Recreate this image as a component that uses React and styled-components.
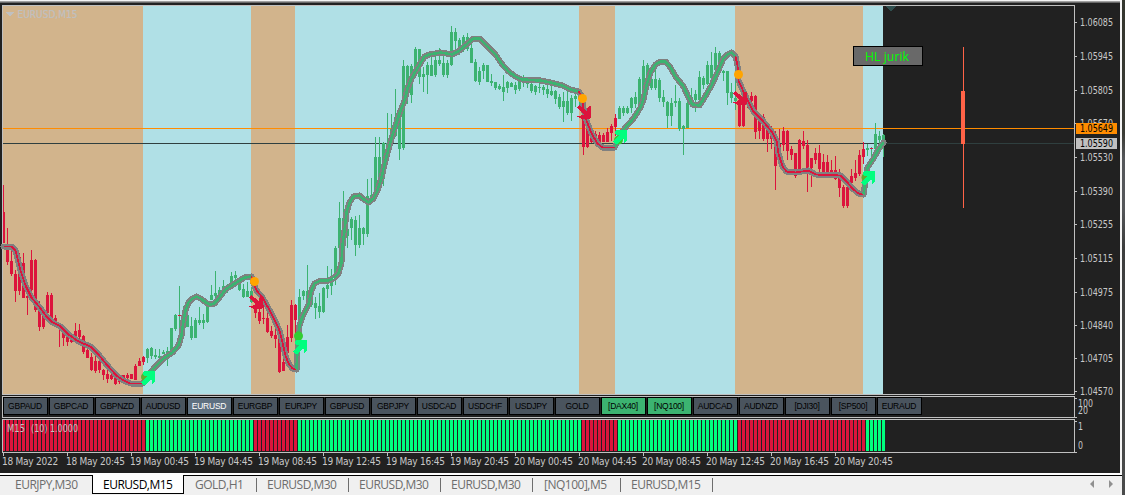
import React from 'react'
import styled, { createGlobalStyle } from 'styled-components'

const RED = '#dc143c'
const GREEN = '#3cb371'
const LIME = '#00ff7f'
const TAN = '#d2b48c'
const SKY = '#b0e0e6'
const ORANGE = '#ffa500'

// trend zones, x from / x to
const ZONES = [
  { from: 3, to: 143, color: TAN },
  { from: 143, to: 251, color: SKY },
  { from: 251, to: 295, color: TAN },
  { from: 295, to: 579, color: SKY },
  { from: 579, to: 615, color: TAN },
  { from: 615, to: 735, color: SKY },
  { from: 735, to: 863, color: TAN },
  { from: 863, to: 883, color: SKY },
]

// index of the first bar of every trend
const TRENDS = [
  { start: 0, up: false },
  { start: 36, up: true },
  { start: 63, up: false },
  { start: 74, up: true },
  { start: 145, up: false },
  { start: 154, up: true },
  { start: 184, up: false },
  { start: 216, up: true },
]
const BAR_COUNT = 221

// high, body top, body bottom, low (one bar every 4px)
const CANDLES = [
  [185,212,243,243],[228,248,262,265],[251,261,274,276],[270,274,291,302],[253,257,291,295],[253,263,298,298],[287,296,298,315],[250,260,290,297],[259,260,310,312],[301,305,327,331],
  [312,313,327,329],[292,295,313,317],[293,295,318,320],[315,318,323,323],[323,324,326,347],[326,329,338,346],[332,333,342,346],[336,337,342,343],[323,331,337,340],[324,330,337,340],
  [335,336,352,354],[343,350,358,358],[353,357,370,371],[353,361,371,373],[353,361,370,373],[369,370,375,380],[370,374,379,383],[373,375,379,380],[373,376,384,385],[375,379,382,384],
  [375,375,380,384],[373,375,378,380],[374,374,379,379],[364,366,380,380],[358,361,366,366],[356,357,362,365],[348,349,358,363],[347,348,356,359],[349,355,357,359],[349,356,358,360],
  [350,352,354,354],[347,351,354,366],[328,328,350,351],[314,315,329,331],[286,315,316,330],[306,311,320,320],[310,315,327,327],[317,326,338,340],[318,320,338,338],[307,320,323,325],
  [314,320,323,329],[300,305,322,323],[285,295,300,300],[271,293,296,300],[287,290,295,295],[280,286,293,296],[284,286,289,293],[272,276,283,289],[271,275,278,280],[279,282,290,291],
  [284,289,297,298],[282,291,297,297],[287,291,302,303],[301,305,313,318],[295,312,321,324],[305,318,319,324],[312,318,332,333],[326,331,336,338],[328,335,339,348],[331,338,372,373],
  [338,362,371,371],[325,337,353,361],[300,305,338,342],[304,305,320,335],[289,297,320,324],[290,291,296,300],[265,291,300,304],[292,293,305,307],[297,303,308,319],[293,306,312,318],
  [287,288,312,313],[266,285,289,298],[269,281,286,295],[246,248,280,285],[202,218,248,250],[191,218,247,250],[213,229,236,248],[217,219,228,240],[216,220,245,256],[215,228,245,248],
  [227,228,234,245],[179,196,234,237],[178,195,200,202],[137,157,196,198],[137,157,180,190],[142,143,179,186],[113,143,160,165],[114,129,143,146],[89,117,136,137],[106,109,149,160],
  [60,66,148,150],[65,66,90,104],[64,66,95,103],[47,49,68,75],[49,49,77,84],[67,74,77,92],[62,65,75,94],[57,65,76,76],[56,60,75,77],[48,60,64,66],
  [56,63,75,77],[60,63,75,78],[26,32,65,66],[28,32,41,50],[38,40,50,55],[35,37,49,52],[33,37,49,51],[40,48,63,63],[59,62,81,82],[67,71,82,85],
  [63,65,71,79],[65,65,82,82],[74,81,83,86],[82,82,88,90],[84,86,89,90],[75,87,92,101],[81,82,88,93],[82,83,87,87],[82,85,90,94],[80,81,89,91],
  [75,78,83,87],[79,80,84,88],[81,84,91,93],[85,86,92,95],[82,87,88,93],[85,87,90,95],[85,89,94,98],[85,91,95,96],[90,91,99,104],[94,97,107,109],
  [92,101,107,122],[91,101,113,115],[95,98,113,121],[94,96,99,107],[93,95,99,107],[100,105,147,155],[115,127,147,148],[130,137,142,143],[131,134,140,144],[132,135,142,142],
  [133,135,142,142],[128,132,142,142],[124,126,133,141],[114,118,127,136],[106,108,119,119],[106,108,113,116],[106,108,113,114],[97,98,108,113],[92,97,104,108],[77,79,108,108],
  [60,66,103,105],[63,65,80,85],[70,79,88,90],[67,79,88,90],[78,80,98,102],[90,97,102,107],[101,102,116,128],[98,103,116,126],[85,101,103,107],[98,101,129,131],
  [125,126,129,155],[102,103,128,128],[88,97,105,106],[90,94,100,112],[71,77,100,102],[76,78,85,89],[61,65,84,85],[52,65,78,82],[47,53,70,72],[51,53,70,74],
  [70,71,73,81],[71,71,93,105],[83,92,98,103],[80,98,101,110],[99,100,126,127],[90,95,126,127],[93,98,104,108],[92,96,101,109],[95,96,132,139],[115,120,131,139],
  [114,117,139,141],[123,125,139,152],[126,130,139,149],[131,140,166,190],[129,144,157,162],[127,131,145,151],[130,131,151,160],[146,149,155,160],[153,153,176,178],[139,140,175,175],
  [131,141,146,149],[140,145,170,192],[158,158,168,187],[148,153,160,164],[145,153,169,172],[154,162,172,174],[155,162,172,173],[160,170,172,178],[156,170,179,180],[169,177,188,197],
  [185,187,206,208],[178,187,206,208],[169,176,183,185],[160,173,178,181],[150,155,174,176],[142,149,157,164],[144,148,150,156],[147,148,149,158],[123,134,149,155],[131,136,140,149],
  [134,135,140,157],
]
const DOJI_RED = [44, 217]

const LINES = [
  { up: false, pts: '3,246 11,246 15,250 17,258 20,270 25,285 31,297 40,308 46,316 52,322 60,326 68,334 78,341 90,346 98,354 106,364 116,375 123,380 130,383 142,383' },
  { up: true, pts: '142,383 148,374 154,367 163,358 172,352 178,345 181,335 183,320 185,310 188,302 192,298 196,296 200,298 207,303 210,304 214,303 219,297 225,289 236,282 244,277 251,276' },
  { up: false, pts: '251,276 253,283 256,290 262,297 272,315 279,330 282,342 285,355 288,363 292,368 296,369' },
  { up: true, pts: '296,369 297,350 298,333 299,325 302,316 308,304 311,290 314,283 320,280 328,280 333,278 338,273 341,262 342,245 344,230 346,212 349,202 353,196 359,195 362,198 368,202 373,198 377,190 381,177 385,160 389,145 394,128 399,113 404,100 407,88 411,78 418,66 424,56 429,54 440,52 452,54 459,50 467,43 473,38 479,38 486,45 495,54 501,63 508,71 515,76 521,79 540,80 550,82 562,85 570,89 578,91' },
  { up: false, pts: '578,91 581,95 583,108 586,120 591,133 597,143 602,147 614,147' },
  { up: true, pts: '614,147 619,137 624,128 633,118 640,107 643,99 646,85 650,72 655,64 660,61 665,61 670,67 675,76 683,86 688,97 692,104 699,105 704,97 711,85 717,72 723,58 727,54 731,52 735,56' },
  { up: false, pts: '735,56 737,65 738,80 742,89 747,100 753,111 762,120 771,131 776,140 778,153 782,166 786,171 795,172 808,170 815,174 840,175 846,181 852,188 858,193 863,194' },
  { up: true, pts: '863,194 865,180 867,167 873,158 878,149 883,142' },
]

const UP_ARROWS = [[141, 371], [293, 340], [613, 130], [861, 171]]
const DOWN_ARROWS = [[249, 295], [577, 105], [733, 91]]
const DOTS = [
  { x: 145.5, y: 377, color: '#5fae2e' },
  { x: 298.5, y: 336, color: '#32cd32' },
  { x: 618.5, y: 140, color: '#32cd32' },
  { x: 866, y: 177.5, color: '#5fae2e' },
  { x: 254.5, y: 281.5, color: ORANGE },
  { x: 582.5, y: 98.5, color: ORANGE },
  { x: 738.5, y: 74.5, color: ORANGE },
]

const PRICES = [
  ['1.06085', 22], ['1.05945', 56], ['1.05805', 90], ['1.05670', 123], ['1.05530', 157], ['1.05390', 191],
  ['1.05255', 224], ['1.05115', 258], ['1.04975', 292], ['1.04840', 325], ['1.04705', 358], ['1.04570', 391],
]

const SYMBOLS = [
  'GBPAUD', 'GBPCAD', 'GBPNZD', 'AUDUSD', 'EURUSD', 'EURGBP', 'EURJPY', 'GBPUSD', 'GBPJPY', 'USDCAD',
  'USDCHF', 'USDJPY', 'GOLD', '[DAX40]', '[NQ100]', 'AUDCAD', 'AUDNZD', '[DJI30]', '[SP500]', 'EURAUD',
]

const TIMES = [
  '18 May 2022', '18 May 20:45', '19 May 00:45', '19 May 04:45', '19 May 08:45', '19 May 12:45', '19 May 16:45',
  '19 May 20:45', '20 May 00:45', '20 May 04:45', '20 May 08:45', '20 May 12:45', '20 May 16:45', '20 May 20:45',
]

const TABS = [
  { name: 'EURJPY,M30', width: 92, indent: 15 },
  { name: 'EURUSD,M15', width: 92, indent: 10, active: true },
  { name: 'GOLD,H1', width: 73, indent: 11 },
  { name: 'EURUSD,M30', width: 92, indent: 10 },
  { name: 'EURUSD,M30', width: 92, indent: 10 },
  { name: 'EURUSD,M30', width: 92, indent: 10 },
  { name: '[NQ100],M5', width: 88, indent: 11 },
  { name: 'EURUSD,M15', width: 92, indent: 10 },
]

function isUp(i){
  let up = false
  TRENDS.forEach(t => { if(i >= t.start) up = t.up })
  return up
}

function Candle(props){
  const [high, top, bottom, low] = props.data
  const x = 3 + props.index * 4
  const color = isUp(props.index) ? GREEN : RED
  const left = props.index === 0 ? x : x - 1
  return (
    <g fill={color}>
      <rect x={x} y={high} width="1" height={Math.max(low - high, 1)}/>
      <rect x={left} y={top} width={x + 2 - left} height={Math.max(bottom - top, 1)} fill={DOJI_RED.includes(props.index) ? RED : color}/>
    </g>
  )
}

function PriceChart(){
  return (
    <Drawing width="1071" height="388" viewBox="3 6 1071 388" shapeRendering="crispEdges">
      {ZONES.map(z => <rect key={z.from} x={z.from} y="6" width={z.to - z.from} height="388" fill={z.color}/>)}
      <rect x="3" y="128" width="1071" height="1" fill="#ff8c00"/>
      <rect x="3" y="143" width="1071" height="1" fill="#2f3f3f"/>
      {CANDLES.map((c, i) => <Candle key={i} index={i} data={c}/>)}
      {LINES.map((l, i) => (
        <polyline key={i} points={l.pts} transform="translate(0.5 0.5)" fill="none" stroke="#808080" strokeWidth="6" strokeLinejoin="round" strokeLinecap="round"/>
      ))}
      {LINES.map((l, i) => (
        <polyline key={i} points={l.pts} transform="translate(0.5 0.5)" fill="none" stroke={l.up ? GREEN : RED} strokeWidth={l.up ? 2.6 : 1.8} strokeLinejoin="round"/>
      ))}
      {DOTS.map(d => <circle key={d.x} cx={d.x} cy={d.y} r="4.5" fill={d.color} shapeRendering="auto"/>)}
      {UP_ARROWS.map(([x, y]) => (
        <path key={x} transform={`translate(${x} ${y})`} d="M2.5 0.5 L14 0 V10.5 L10.5 14 V8.5 L3.5 14.5 L0 11.5 L6 5.5 L2 4 Z" fill={LIME}/>
      ))}
      {DOWN_ARROWS.map(([x, y]) => (
        <path key={x} transform={`translate(${x} ${y})`} d="M0 2.5 L2.5 0 L9.5 6 L11 2 L14 0.5 V13 L12 14 H5 L0 11.5 L6 10 L7 9 Z" fill={RED}/>
      ))}
      <rect x="963" y="47" width="1" height="161" fill="#ff6347"/>
      <rect x="961" y="91" width="4" height="53" fill="#ff6347"/>
      <path d="M885 6 H896 L890.5 11.5 Z" fill="#2f4f4f"/>
      <path d="M6 12 H14 L10 16.5 Z" fill="#c0c0c0"/>
      <text x="17.5" y="17.5" textLength="60" lengthAdjust="spacingAndGlyphs" fontSize="10.5" fill="#c0c0c0" stroke="#c0c0c0" strokeWidth="0.2">EURUSD,M15</text>
      <rect x="853.5" y="46.5" width="69" height="19" fill="#696969" stroke="#000"/>
      <HLText x="865" y="61" textLength="44" lengthAdjust="spacingAndGlyphs">HL jurik</HLText>
    </Drawing>
  )
}

function PriceText(props){
  return <text x="1080" y={props.y} textLength="33" lengthAdjust="spacingAndGlyphs" fontSize="10" fill={props.fill}>{props.children}</text>
}

function PriceScale(){
  return (
    <Drawing width="45" height="390" viewBox="1075 5 45 390">
      {PRICES.map(([label, y]) => (
        <g key={label}>
          <rect x="1075" y={y} width="2" height="1" fill="#c0c0c0"/>
          <PriceText y={y + 4} fill="#c8c8c8">{label}</PriceText>
        </g>
      ))}
      <rect x="1076" y="123" width="41" height="11" fill="#ff8c00"/>
      <PriceText y={132} fill="#000">1.05649</PriceText>
      <rect x="1076" y="138" width="41" height="11" fill="#c0c0c0"/>
      <PriceText y={147} fill="#000">1.05590</PriceText>
    </Drawing>
  )
}

function SmallScale(props){
  return (
    <Drawing width="45" height={props.height}>
      <rect x="0" y="2" width="2" height="1" fill="#c0c0c0"/>
      <rect x="0" y={props.height - 1} width="2" height="1" fill="#c0c0c0"/>
      {props.labels.map(l => (
        <text key={l.text} x="3" y={l.y} textLength={l.text.length * 5} lengthAdjust="spacingAndGlyphs" fontSize="10" fill="#c8c8c8">{l.text}</text>
      ))}
    </Drawing>
  )
}

function Histogram(){
  const bars = []
  for(let i = 0; i < BAR_COUNT; i++){
    bars.push(<rect key={i} x={i === 0 ? 0 : i * 4 - 1} y="0" width={i === 0 ? 2 : 3} height="31" fill={isUp(i) ? LIME : RED}/>)
  }
  return (
    <Drawing width="1071" height="32" shapeRendering="crispEdges">
      {bars}
      <text x="4" y="12" textLength="18" lengthAdjust="spacingAndGlyphs" fontSize="10" fill="#c0c0c0">M15</text>
      <text x="28" y="12" textLength="47" lengthAdjust="spacingAndGlyphs" fontSize="10" fill="#c0c0c0">(10) 1.0000</text>
    </Drawing>
  )
}

function symbolState(name){
  if(name === 'EURUSD') return 'active'
  if(name === '[DAX40]' || name === '[NQ100]') return 'index'
  return 'normal'
}

export default function App(){
  return (
    <Desktop>
      <GlobalStyle/>
      <Terminal>
        <ChartWindow>
          <PaneRow>
            <Pane><PriceChart/></Pane>
            <PriceScale/>
          </PaneRow>
          <PaneRow>
            <Pane>
              <SymbolBar>
                {SYMBOLS.map(s => <SymbolButton key={s} $state={symbolState(s)}>{s}</SymbolButton>)}
              </SymbolBar>
            </Pane>
            <SmallScale height={22} labels={[{ text: '100', y: 11 }, { text: '20', y: 18 }]}/>
          </PaneRow>
          <PaneRow>
            <Pane><Histogram/></Pane>
            <SmallScale height={34} labels={[{ text: '1', y: 11 }, { text: '0', y: 30 }]}/>
          </PaneRow>
          <TimeAxis>
            {TIMES.map(t => <TimeLabel key={t}><span>{t}</span></TimeLabel>)}
          </TimeAxis>
        </ChartWindow>
        <TabBar>
          {TABS.map((t, i) => (
            <Tab key={i} $width={t.width} $indent={t.indent} $active={t.active} $divider={i > 1}>{t.name}</Tab>
          ))}
          <TabScroll width="30" height="8">
            <path d="M5 0 V8 L1 4 Z M20 0 V8 L24 4 Z" fill="#909090"/>
          </TabScroll>
        </TabBar>
      </Terminal>
    </Desktop>
  )
}

// STYLE
const GlobalStyle = createGlobalStyle`
  * { box-sizing: border-box; }
  body {
    margin: 0;
    overflow: hidden;
    font-family: "DejaVu Sans Condensed", "Noto Sans", sans-serif;
  }
`;
const Desktop = styled.div`
  width: 1125px;
  height: 495px;
  padding-right: 3px;
  background: linear-gradient(180deg, #34362e 0%, #3a3b35 27%, #55575a 32%, #55575a 42%, #3c3d3d 50%, #4a4b4b 100%);
`;
const Terminal = styled.div`
  height: 495px;
  display: flex;
  flex-direction: column;
  background: #f0f0f0;
`;
const ChartWindow = styled.div`
  height: 475px;
  display: flex;
  flex-direction: column;
  gap: 1px;
  padding: 4px 0px 0px 2px;
  background: #212121;
  border-top: 1px solid #f4f4f4;
  border-right: 2px solid #f4f4f4;
  border-bottom: 2px solid #ffffff;
  box-shadow: inset 0px 1px 0px #a0a0a0, inset 0px 2px 0px #696969;
`;
const PaneRow = styled.div`
  display: flex;
  flex-direction: row;
`;
const Pane = styled.div`
  width: 1073px;
  border: 1px solid #c0c0c0;
`;
const Drawing = styled.svg`
  display: block;
  flex: none;
  overflow: visible;
`;
const HLText = styled.text`
  font-family: "Open Sans", "Noto Sans", sans-serif;
  font-size: 13.5px;
  fill: #00ff00;
`;
const SymbolBar = styled.div`
  display: flex;
  gap: 1px;
  height: 20px;
`;
const SYMBOL_COLORS = { normal: '#4a545e', active: '#5f7080', index: '#3cb371' }
const SymbolButton = styled.div`
  width: 45px;
  height: 18px;
  border: 1px solid #000000;
  background: ${props => SYMBOL_COLORS[props.$state]};
  color: ${props => props.$state === 'active' ? '#ffffff' : '#000000'};
  font-family: "Liberation Sans", Arial, sans-serif;
  font-size: 8.5px;
  letter-spacing: -0.25px;
  line-height: 17px;
  text-align: center;
  white-space: nowrap;
  padding-right: 1px;
`;
const TimeAxis = styled.div`
  display: flex;
  height: 20px;
  margin-top: -1px;
  padding-left: 1px;
`;
const TimeLabel = styled.div`
  width: 64px;
  flex: none;
  color: #c8c8c8;
  font-size: 10px;
  letter-spacing: -0.25px;
  line-height: 12px;
  white-space: nowrap;
  &::before{
    content: '';
    display: block;
    width: 1px;
    height: 3px;
    background: #c0c0c0;
  }
  span{
    display: block;
    margin-left: -1px;
  }
`;
const TabBar = styled.div`
  display: flex;
  height: 20px;
  border-top: 1px solid #000000;
  background: #f0f0f0;
  font-family: "Open Sans", "Noto Sans", sans-serif;
`;
const Tab = styled.div`
  position: relative;
  width: ${props => props.$width}px;
  height: ${props => props.$active ? 19 : 18}px;
  margin-top: ${props => props.$active ? -1 : 0}px;
  padding-left: ${props => props.$indent}px;
  font-size: 12px;
  line-height: ${props => props.$active ? 19 : 17}px;
  letter-spacing: -0.5px;
  white-space: nowrap;
  color: ${props => props.$active ? '#000000' : '#6d6d6d'};
  background: ${props => props.$active ? '#ffffff' : 'transparent'};
  border: ${props => props.$active ? '1px solid #000000' : 'none'};
  border-top: none;
  &::after{
    content: '';
    display: ${props => props.$divider ? 'block' : 'none'};
    position: absolute;
    right: 0px;
    top: 2px;
    width: 1px;
    height: 14px;
    background: #6d6d6d;
  }
`;
const TabScroll = styled.svg`
  margin: 4px 3px 0px auto;
`;
